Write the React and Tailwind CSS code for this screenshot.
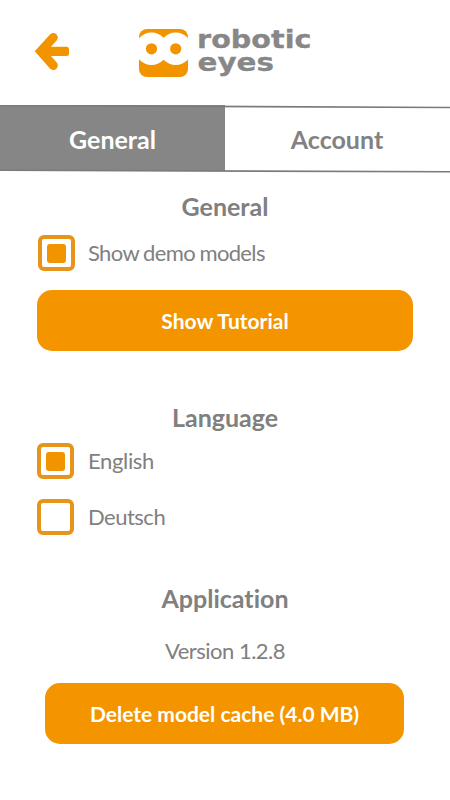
import clsx from 'clsx';

function BackArrow() {
    return (
        <svg width="36" height="38" viewBox="34 32 36 38" className="block">
            <path d="M53.3 37.5 L40.8 51.3 L53.3 65.5" fill="none" stroke="#f29400" strokeWidth="9" strokeLinecap="round" strokeLinejoin="miter" />
            <rect x="40" y="46.8" width="29" height="9.2" rx="2.5" fill="#f29400" />
        </svg>
    );
}

function Logo() {
    return (
        <svg width="186" height="60" viewBox="138 22 186 60" className="block">
            <rect x="139" y="29" width="49" height="48" rx="8" fill="#f29400" />
            <circle cx="151.5" cy="48.8" r="16.2" fill="#fff" />
            <circle cx="175.7" cy="48.8" r="16.2" fill="#fff" />
            <circle cx="151.5" cy="48.8" r="5.6" fill="#f29400" />
            <circle cx="175.7" cy="48.8" r="5.6" fill="#f29400" />
            <g fill="#878787" stroke="#878787" strokeWidth="0.3" className="font-['DejaVu_Sans',sans-serif] text-[25px] font-bold">
                <text x="197" y="48" textLength="114.5" lengthAdjust="spacingAndGlyphs">
                    robotic
                </text>
                <text x="197.5" y="71" textLength="76.5" lengthAdjust="spacingAndGlyphs">
                    eyes
                </text>
            </g>
        </svg>
    );
}

function Tabs() {
    return (
        <div className="relative grid h-[66px] grid-cols-2 text-center text-[25px] leading-[64px] font-bold">
            <button className="bg-[#868686] pt-0.5 text-white">General</button>
            <button className="pt-0.5 pr-px text-[#828282]">Account</button>
            <svg width="450" height="68" viewBox="0 0 450 68" className="absolute top-0 left-0">
                <path d="M0 0.5 L450 2.5 M0 65.3 L450 66.8" stroke="#7b7b7b" strokeWidth="1.6" />
            </svg>
        </div>
    );
}

function Option({ label, checked, className }) {
    return (
        <label className={clsx('flex items-center', className)}>
            <span className="mr-auto flex h-9 w-[37px] items-center justify-center rounded-[6px] border-4 border-[#e6941a]">
                {checked && <span className="size-[19px] rounded-[3px] bg-[#f29400]" />}
            </span>
            <span className="w-[362px] text-[22px] leading-8">{label}</span>
        </label>
    );
}

function App() {
    return (
        <div className="h-[800px] w-[450px] overflow-hidden bg-white font-['Lato',sans-serif] text-[#808080] [font-variant-ligatures:none]">
            <header className="flex h-[105px] items-start pl-[34px]">
                <div className="mt-8">
                    <BackArrow />
                </div>
                <div className="mt-[22px] ml-[68px]">
                    <Logo />
                </div>
            </header>
            <Tabs />

            <section className="pt-[19px]">
                <h2 className="text-center text-[25px] leading-8 font-bold">General</h2>
                <Option label="Show demo models" checked className="mt-[13px] ml-[38px] tracking-[-0.65px] [word-spacing:-0.5px]" />
                <button className="mt-[19px] ml-[37px] block h-[61px] w-[376px] rounded-[15px] bg-[#f49500] text-[21px] font-bold text-white">
                    Show Tutorial
                </button>
            </section>

            <section className="pt-[50px]">
                <h2 className="text-center text-[25px] leading-8 font-bold">Language</h2>
                <Option label="English" checked className="mt-[10px] ml-[37px] tracking-[-0.35px]" />
                <Option label="Deutsch" className="mt-[20px] ml-[37px] tracking-[-0.5px]" />
            </section>

            <section className="pt-[47px]">
                <h2 className="text-center text-[25px] leading-8 font-bold">Application</h2>
                <p className="mt-[21px] text-center text-[22px] leading-8 tracking-[-0.5px]">Version 1.2.8</p>
                <button className="mt-4 ml-[45px] block h-[61px] w-[359px] rounded-[15px] bg-[#f49500] text-[21px] font-bold text-white">
                    Delete model cache (4.0 MB)
                </button>
            </section>
        </div>
    );
}

export default App;
